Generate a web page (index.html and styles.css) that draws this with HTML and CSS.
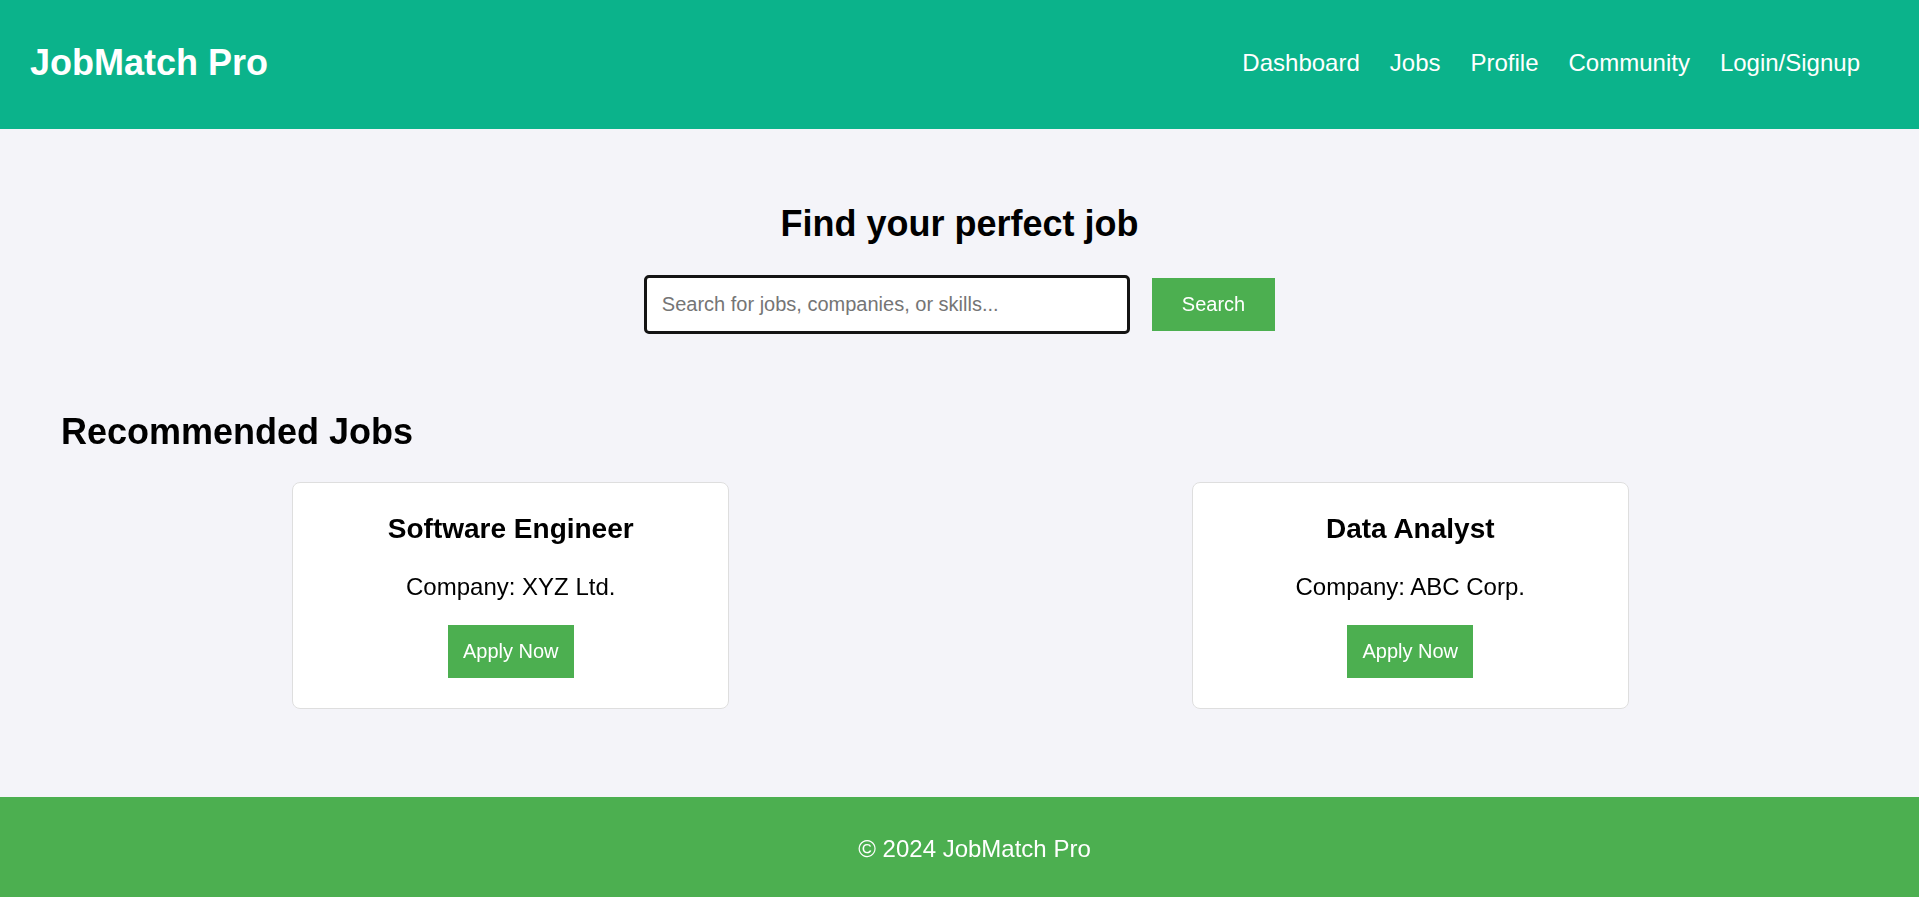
FILE: index.html
```html
<!DOCTYPE html>
<html lang="en">
<head>
<meta charset="utf-8">
<title>JobMatch Pro</title>
<link rel="stylesheet" href="styles.css">
</head>
<body>
<header class="topbar">
  <h1 class="logo">JobMatch Pro</h1>
  <nav class="nav">
    <a href="#">Dashboard</a>
    <a href="#">Jobs</a>
    <a href="#">Profile</a>
    <a href="#">Community</a>
    <a href="#">Login/Signup</a>
  </nav>
</header>
<main>
  <section class="hero">
    <h2 class="hero-title">Find your perfect job</h2>
    <div class="search-row">
      <input class="search-input" type="text" placeholder="Search for jobs, companies, or skills..." autofocus>
      <button class="btn btn-search">Search</button>
    </div>
  </section>
  <section class="jobs">
    <h2 class="jobs-title">Recommended Jobs</h2>
    <div class="job-list">
      <div class="job-card">
        <h3 class="job-name">Software Engineer</h3>
        <p class="job-company">Company: XYZ Ltd.</p>
        <button class="btn btn-apply">Apply Now</button>
      </div>
      <div class="job-card">
        <h3 class="job-name">Data Analyst</h3>
        <p class="job-company">Company: ABC Corp.</p>
        <button class="btn btn-apply">Apply Now</button>
      </div>
    </div>
  </section>
</main>
<footer class="footer">
  <p class="footer-text">© 2024 JobMatch Pro</p>
</footer>
</body>
</html>
```
FILE: styles.css
```css
* { box-sizing: border-box; }

body {
  margin: 0;
  font-family: "Liberation Sans", Arial, sans-serif;
  background: #f4f4f9;
  color: #000;
}

.topbar {
  height: 129px;
  display: flex;
  justify-content: space-between;
  align-items: center;
  padding: 0 59px 4px 30px;
  background: #0bb38b;
  color: #fff;
}

.logo {
  margin: 0;
  font-size: 36px;
  line-height: 41px;
  font-weight: bold;
}

.nav {
  display: flex;
  gap: 30px;
  font-size: 24px;
  line-height: 28px;
}

.nav a {
  color: #fff;
  text-decoration: none;
}

.hero {
  padding-top: 74px;
  text-align: center;
}

.hero-title,
.jobs-title {
  margin: 0;
  font-size: 36px;
  line-height: 41px;
  font-weight: bold;
  color: #000;
}

.search-row {
  margin-top: 31px;
  display: flex;
  justify-content: center;
  align-items: center;
  gap: 22px;
}

.search-input {
  box-sizing: content-box;
  width: 450px;
  padding: 15px;
  border: 3px solid #141414;
  border-radius: 5px;
  background: #fff;
  font-family: "Liberation Sans", Arial, sans-serif;
  font-size: 20px;
  line-height: 23px;
  height: 23px;
  color: #111;
  caret-color: #000;
  outline: none;
}

.search-input::placeholder {
  color: #757575;
}

.btn {
  border: none;
  background: #4caf50;
  color: #fff;
  font-family: "Liberation Sans", Arial, sans-serif;
  font-size: 20px;
  line-height: 23px;
  cursor: pointer;
}

.btn-search {
  padding: 15px 30px;
}

.jobs {
  margin-top: 77px;
  padding: 0 59px 0 61px;
}

.jobs-title {
  text-align: left;
}

.job-list {
  margin-top: 30px;
  display: flex;
  justify-content: space-around;
}

.job-card {
  width: 437px;
  padding: 30px;
  background: #fff;
  border: 1px solid #dedede;
  border-radius: 8px;
  text-align: center;
}

.job-name {
  margin: 0 0 28px;
  font-size: 28px;
  line-height: 32px;
  font-weight: bold;
  color: #000;
}

.job-company {
  margin: 0 0 24px;
  font-size: 24px;
  line-height: 28px;
  color: #000;
}

.btn-apply {
  padding: 15px;
  display: inline-block;
  vertical-align: top;
}

.footer {
  margin-top: 88px;
  padding: 38px 0 34px 30px;
  background: #4caf50;
  color: #fff;
  text-align: center;
}

.footer-text {
  margin: 0;
  font-size: 24px;
  line-height: 28px;
}
```
